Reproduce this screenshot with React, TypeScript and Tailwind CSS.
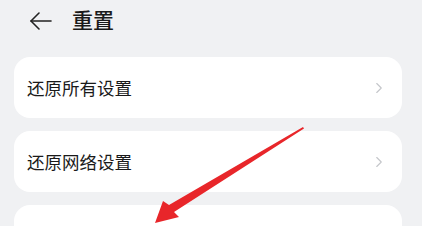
import { ChevronRight } from 'lucide-react';

const items = ['还原所有设置', '还原网络设置', '还原手机'];

export default function App() {
  return (
    <div
      className="relative h-[226px] w-[422px] overflow-hidden bg-[#f0f1f3]"
      style={{ fontFamily: '"Noto Sans CJK SC", "Noto Sans", sans-serif' }}
    >
      <header className="flex h-[57px] items-start pl-[29px] pt-[4px]">
        <svg width="24" height="24" viewBox="0 0 24 24" className="mt-[5px] text-[#222]" fill="none" stroke="currentColor" strokeWidth="1.6" strokeLinecap="round" strokeLinejoin="round">
          <path d="M22 12H2" />
          <path d="M10 4l-8 8 8 8" />
        </svg>
        <h1 className="ml-[19px] text-[21px] font-medium leading-[30px] text-[#1b1b1b]">重置</h1>
      </header>

      <main className="ml-[14px] mr-[20px] flex flex-col gap-[13px]">
        {items.map((label, i) => (
          <div key={label} className="flex h-[61px] shrink-0 items-center justify-between rounded-[16px] bg-white pl-[13px] pr-[14px]">
            <span className={`text-[17.5px] leading-none text-[#1a1a1a] ${i === 2 ? 'invisible' : ''}`}>{label}</span>
            <ChevronRight size={18} strokeWidth={1.5} className="text-[#c4c6ca]" />
          </div>
        ))}
      </main>

      {/* red annotation arrow */}
      <svg className="pointer-events-none absolute left-0 top-0" width="422" height="226" viewBox="0 0 422 226">
        <path d="M303 127 L169 205 L163 201 L155 223 L179 217 L174 212 L304 128.5 Z" fill="#e8262a" />
      </svg>
    </div>
  );
}
